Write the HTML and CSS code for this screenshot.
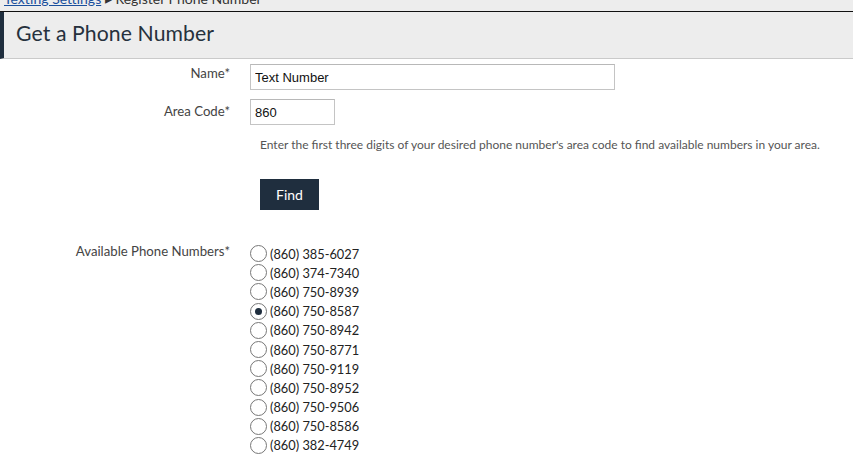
FILE: index.html
```html
<!DOCTYPE html>
<html>
<head>
<meta charset="utf-8">
<link rel="stylesheet" href="styles.css">
</head>
<body>
<div class="crumbs"><div class="crumbs-text"><a href="#">Texting Settings</a> ▸ Register Phone Number</div></div>
<div class="header"><h1>Get a Phone Number</h1></div>
<form class="form">
  <label class="lbl lbl-name">Name*</label>
  <div class="field"><input class="inp inp-name" type="text" value="Text Number"></div>

  <label class="lbl lbl-area">Area Code*</label>
  <div class="field">
    <input class="inp inp-area" type="text" value="860">
    <p class="help">Enter the first three digits of your desired phone number's area code to find available numbers in your area.</p>
    <button type="button" class="btn">Find</button>
  </div>

  <label class="lbl lbl-avail">Available Phone Numbers*</label>
  <div class="field radios">
    <label class="opt"><input type="radio" name="n"><span>(860) 385-6027</span></label>
    <label class="opt"><input type="radio" name="n"><span>(860) 374-7340</span></label>
    <label class="opt"><input type="radio" name="n"><span>(860) 750-8939</span></label>
    <label class="opt"><input type="radio" name="n" checked><span>(860) 750-8587</span></label>
    <label class="opt"><input type="radio" name="n"><span>(860) 750-8942</span></label>
    <label class="opt"><input type="radio" name="n"><span>(860) 750-8771</span></label>
    <label class="opt"><input type="radio" name="n"><span>(860) 750-9119</span></label>
    <label class="opt"><input type="radio" name="n"><span>(860) 750-8952</span></label>
    <label class="opt"><input type="radio" name="n"><span>(860) 750-9506</span></label>
    <label class="opt"><input type="radio" name="n"><span>(860) 750-8586</span></label>
    <label class="opt"><input type="radio" name="n"><span>(860) 382-4749</span></label>
  </div>
</form>
</body>
</html>
```
FILE: styles.css
```css
html, body { margin: 0; padding: 0; background: #fff; }
body { font-family: Lato, "Noto Sans", sans-serif; color: #333; }
.crumbs {
  height: 11px;
  background: #ededed;
  border-bottom: 1px solid #111;
  overflow: hidden;
}
.crumbs-text {
  margin-top: -9px;
  padding-left: 4px;
  font-size: 14px;
  line-height: 16px;
  color: #333;
}
.crumbs-text a { color: #1a4f9c; text-decoration: underline; }
.header {
  box-sizing: border-box;
  height: 47px;
  background: #ededed;
  border-left: 4px solid #1f2e3e;
  border-bottom: 1px solid #cacaca;
  display: flex;
  align-items: center;
  padding-bottom: 4px;
}
.header h1 {
  margin: 0 0 0 12px;
  font-size: 21.2px;
  font-weight: 400;
  color: #26313d;
  letter-spacing: 0.1px;
}
.form {
  display: grid;
  grid-template-columns: 230px 1fr;
  column-gap: 20px;
  padding-top: 5px;
}
.lbl {
  text-align: right;
  font-size: 13.2px;
  color: #444;
  line-height: 16px;
}
.lbl-name { padding-top: 1px; }
.lbl-area { padding-top: 4px; }
.field { display: flex; flex-direction: column; align-items: flex-start; }
.inp {
  box-sizing: border-box;
  height: 26px;
  border: 1px solid #c4c4c4;
  border-top-color: #b8b8b8;
  font-family: "Liberation Sans", Arial, sans-serif;
  font-size: 13px;
  color: #111;
  padding: 0 4px;
  margin: 0;
  outline: none;
}
.inp-name { width: 365px; margin-bottom: 9px; }
.inp-area { width: 85px; }
.help {
  margin: 13px 0 0 10px;
  font-size: 12px;
  color: #555;
  line-height: 14px;
}
.btn {
  margin: 27px 0 0 10px;
  width: 59px;
  height: 31px;
  background: #1f2e3e;
  color: #fff;
  border: none;
  font-family: Lato, "Noto Sans", sans-serif;
  font-size: 14px;
  padding: 0;
}
.radios { padding-top: 34px; }
.lbl-avail { padding-top: 33px; }
.opt {
  display: flex;
  align-items: center;
  height: 19.2px;
  font-size: 12.8px;
  color: #222;
}
.opt input {
  appearance: none;
  -webkit-appearance: none;
  box-sizing: border-box;
  width: 17px;
  height: 17px;
  margin: 0 3px 0 0;
  border: 1.5px solid #777;
  border-radius: 50%;
  background: #fff;
  display: grid;
  place-content: center;
}
.opt input:checked::before {
  content: "";
  width: 7px;
  height: 7px;
  border-radius: 50%;
  background: #1f2e3e;
}
```
